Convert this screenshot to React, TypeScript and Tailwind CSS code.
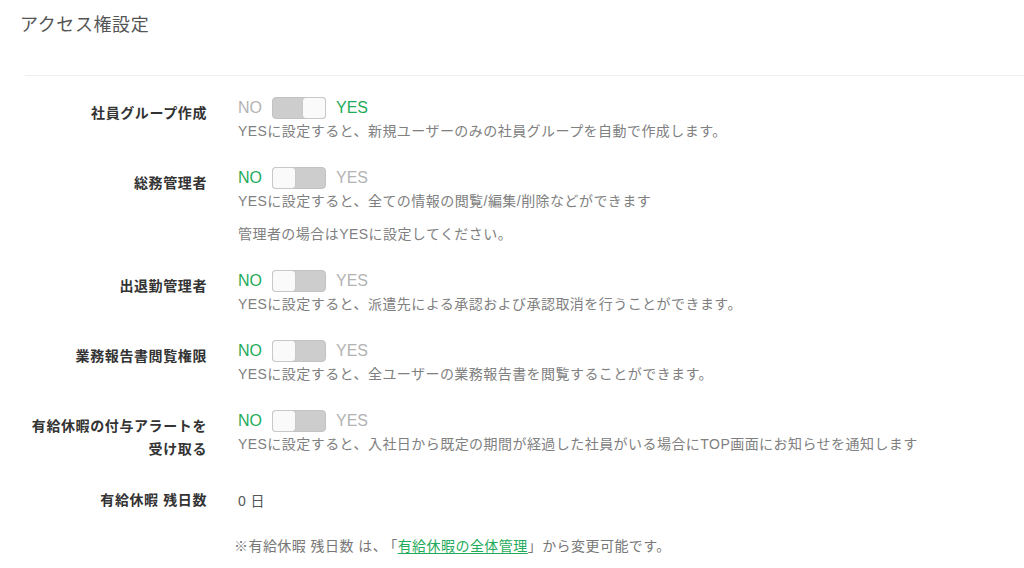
import React from "react";

const font = {
  fontFamily:
    '"Liberation Sans", Arial, "Noto Sans CJK JP", sans-serif',
};

interface ToggleProps {
  on: boolean;
}

function Toggle({ on }: ToggleProps) {
  return (
    <div className="flex h-[22px] items-center gap-x-[10px] text-[16px] leading-[22px]">
      <span className={on ? "text-[#b3b3b3]" : "text-[#1fab5a]"}>NO</span>
      <div
        className={`flex h-[22px] w-[54px] rounded-[4px] border border-[#c2c2c2] bg-[#cdcdcd] ${
          on ? "justify-end" : "justify-start"
        }`}>
        <div className="h-full w-[22px] rounded-[3px] bg-[#fafafa] shadow-[0_0_0_1px_#c8c8c8]" />
      </div>
      <span className={on ? "text-[#1fab5a]" : "text-[#b3b3b3]"}>YES</span>
    </div>
  );
}

interface RowProps {
  label: React.ReactNode;
  on: boolean;
  descs: string[];
}

function SettingRow({ label, on, descs }: RowProps) {
  return (
    <div className="flex">
      <div className="w-[207px] shrink-0 pt-[5px] text-right text-[14px] font-bold leading-[23px] tracking-[0.6px] text-[#333]">
        {label}
      </div>
      <div className="ml-[31px]">
        <Toggle on={on} />
        {descs.map((d, i) => (
          <p
            key={i}
            className={`text-[14px] leading-[20px] tracking-[0.45px] text-[#808080] ${
              i === 0 ? "mt-[2px]" : "mt-[13px]"
            }`}>
            {d}
          </p>
        ))}
      </div>
    </div>
  );
}

export default function App() {
  return (
    <div className="min-h-[568px] w-full bg-white" style={font}>
      <div className="px-[20px] pt-[14px]">
        <h1 className="text-[18px] font-normal leading-[22px] tracking-[0.6px] text-[#555]">
          アクセス権設定
        </h1>
      </div>
      <div className="ml-[25px] mt-[39px] border-t border-[#efefef]" />

      <div className="mt-[21px] flex flex-col gap-y-[26px]">
        <SettingRow
          label="社員グループ作成"
          on={true}
          descs={[
            "YESに設定すると、新規ユーザーのみの社員グループを自動で作成します。",
          ]}
        />
        <SettingRow
          label="総務管理者"
          on={false}
          descs={[
            "YESに設定すると、全ての情報の閲覧/編集/削除などができます",
            "管理者の場合はYESに設定してください。",
          ]}
        />
        <SettingRow
          label="出退勤管理者"
          on={false}
          descs={[
            "YESに設定すると、派遣先による承認および承認取消を行うことができます。",
          ]}
        />
        <SettingRow
          label="業務報告書閲覧権限"
          on={false}
          descs={[
            "YESに設定すると、全ユーザーの業務報告書を閲覧することができます。",
          ]}
        />
        <SettingRow
          label={
            <>
              有給休暇の付与アラートを
              <br />
              受け取る
            </>
          }
          on={false}
          descs={[
            "YESに設定すると、入社日から既定の期間が経過した社員がいる場合にTOP画面にお知らせを通知します",
          ]}
        />
      </div>

      <div className="mt-[28px] flex items-center">
        <div className="w-[207px] shrink-0 text-right text-[14px] font-bold leading-[23px] tracking-[0.6px] text-[#333]">
          有給休暇 残日数
        </div>
        <div className="ml-[31px] text-[14px] leading-[20px] tracking-[0.45px] text-[#555]">
          0 日
        </div>
      </div>

      <p className="ml-[234px] mt-[24px] text-[14px] leading-[20px] tracking-[0.45px] text-[#777]">
        ※有給休暇 残日数 は、<span className="ml-[3px]">「</span>
        <a className="text-[#1fab5a] underline underline-offset-2" href="#">
          有給休暇の全体管理
        </a>
        」から変更可能です。
      </p>
    </div>
  );
}
